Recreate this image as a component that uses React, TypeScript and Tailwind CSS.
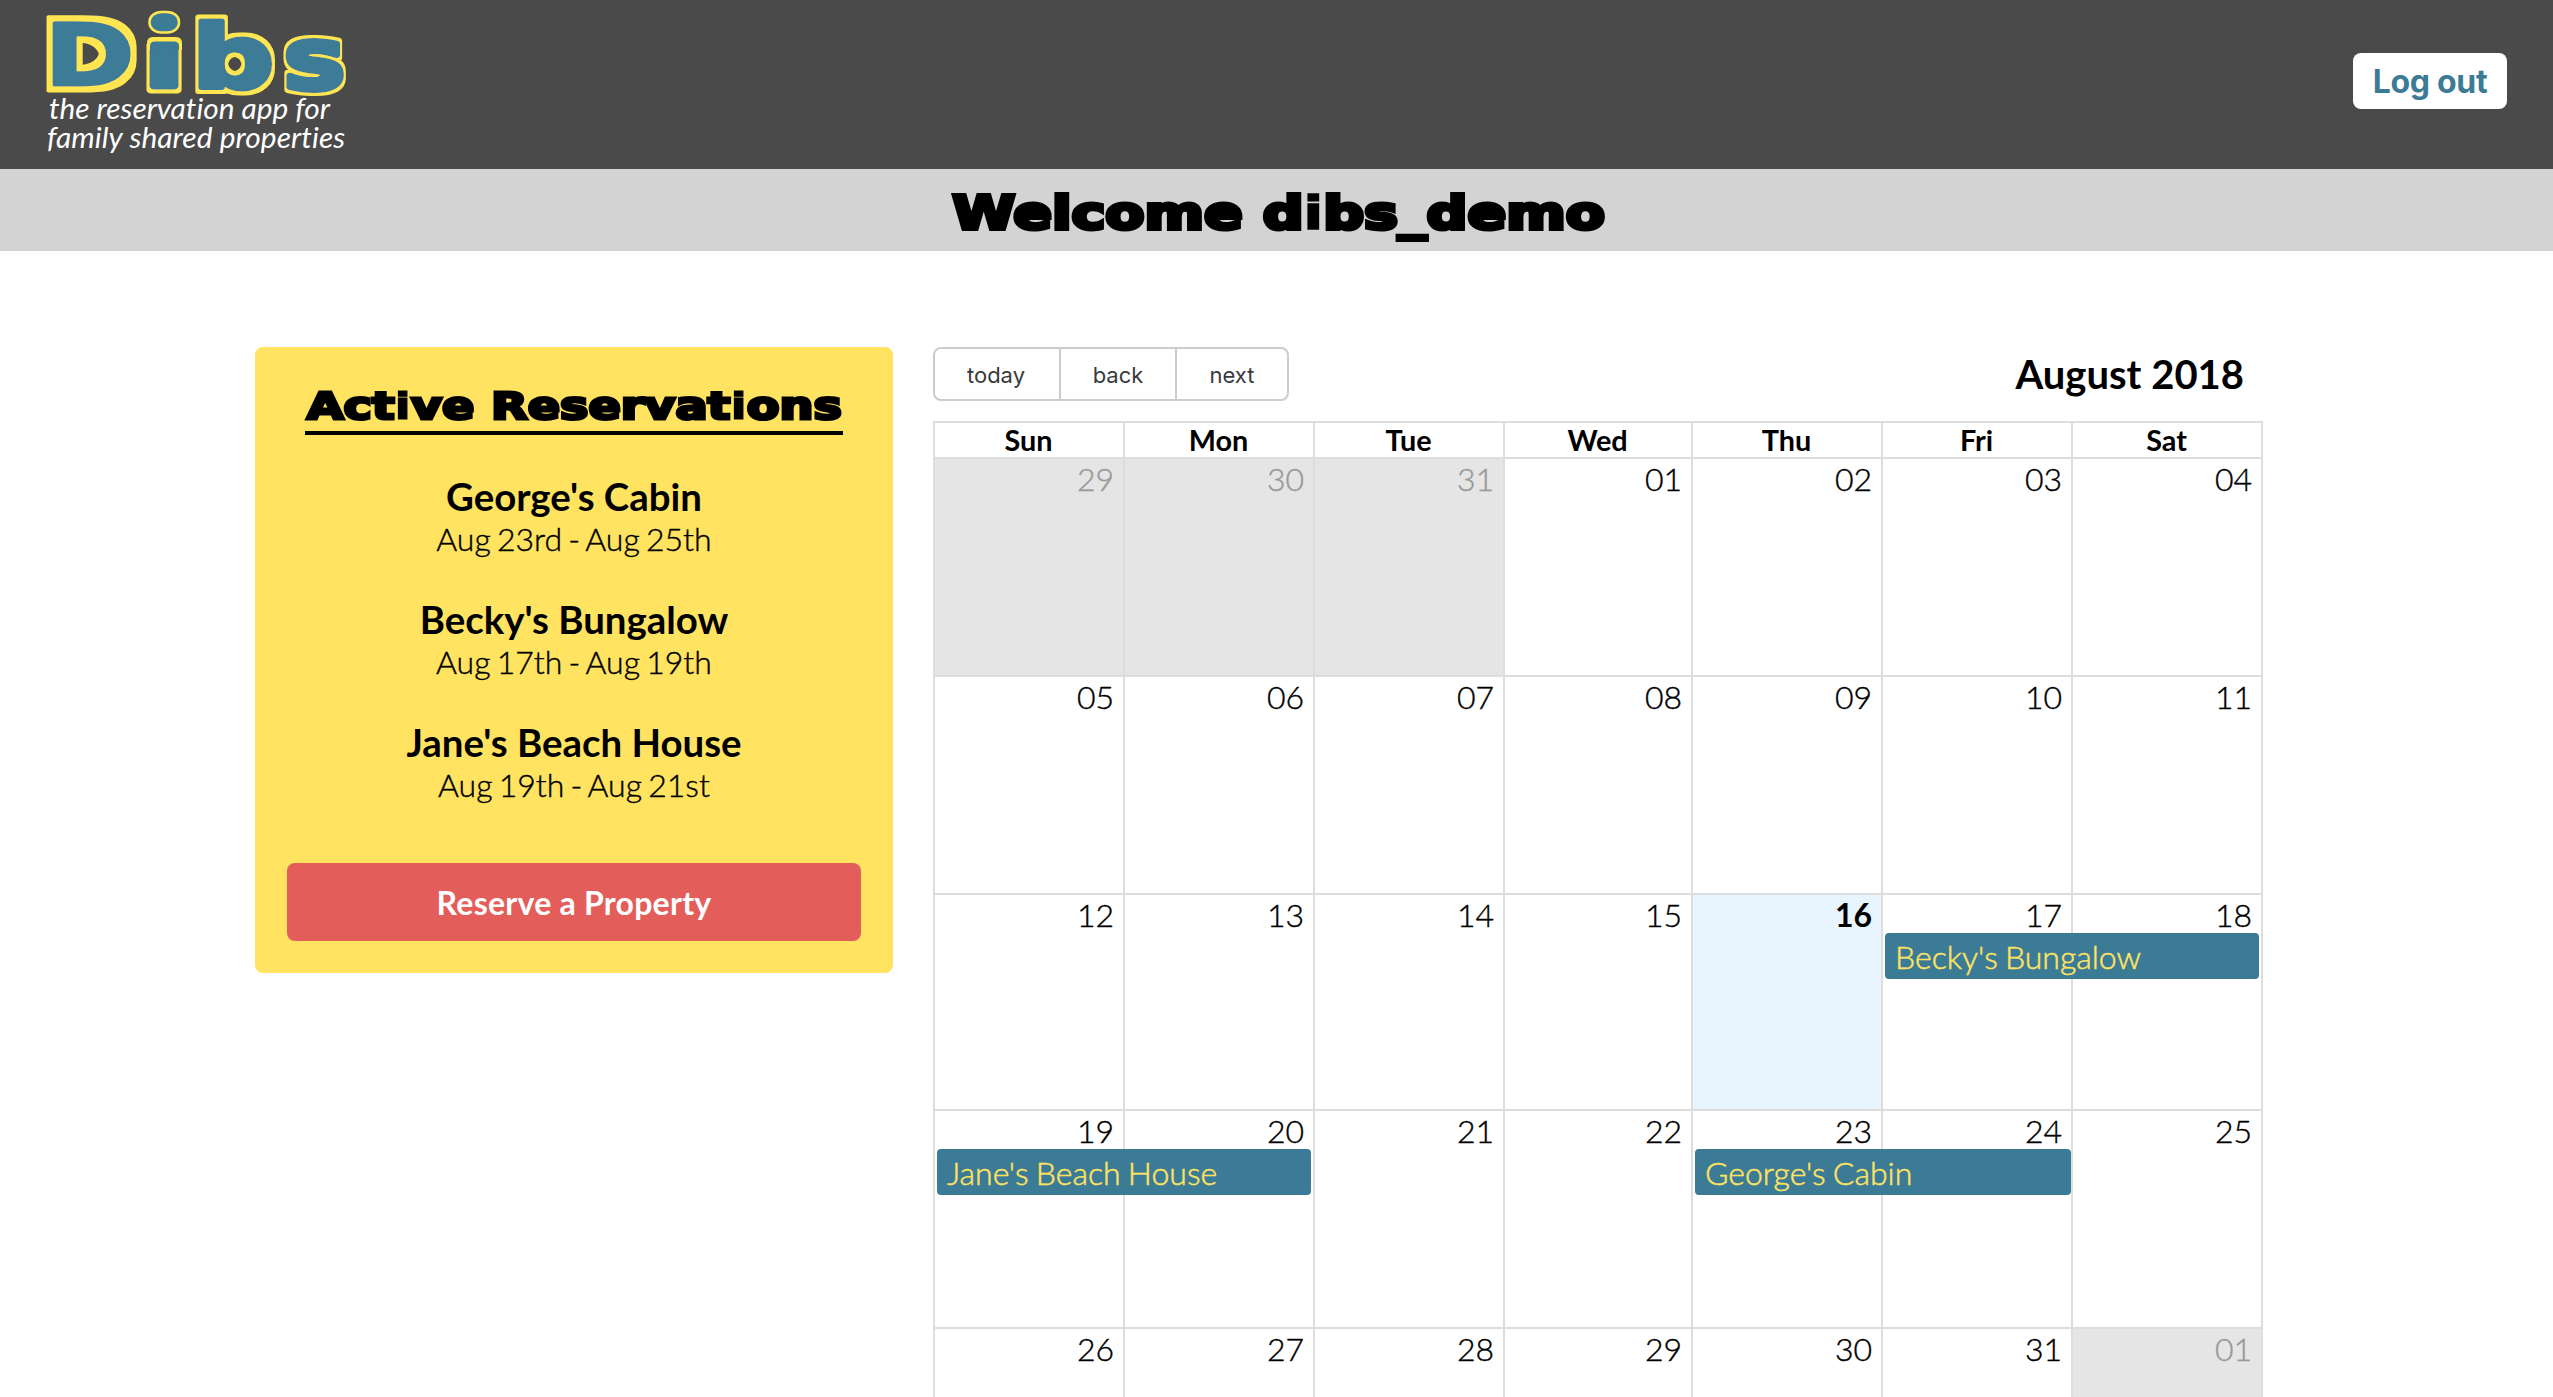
const LOGO_LETTERS = [
  { char: "D", x: 89.5, y: 84.5, sx: 1.26, size: 86, stroke: 3, filter: "url(#outline-thick)" },
  { char: "i", x: 164, y: 86, sx: 1.34, size: 84, stroke: 7, filter: "url(#outline)" },
  { char: "b", x: 233, y: 87, sx: 1.3, size: 88, stroke: 5, filter: "url(#outline)" },
  { char: "s", x: 314.5, y: 88.5, sx: 1.2, size: 86, stroke: 6, filter: "url(#outline-thin)" },
];

const OUTLINES = [
  { id: "outline-thick", radius: "4.5 6" },
  { id: "outline", radius: "2.6 4" },
  { id: "outline-thin", radius: "2 3" },
];

function Logo() {
  return (
    <div className="ml-10 h-[169px] w-[320px]">
      <svg viewBox="40 0 320 94" className="block h-[94px] w-[320px] overflow-visible" role="img" aria-label="Dibs">
        <defs>
          {OUTLINES.map((o) => (
            <filter key={o.id} id={o.id} x="-30%" y="-30%" width="160%" height="160%">
              <feMorphology in="SourceAlpha" operator="dilate" radius={o.radius} result="grown" />
              <feFlood floodColor="#ffe651" />
              <feComposite in2="grown" operator="in" result="edge" />
              <feMerge>
                <feMergeNode in="edge" />
                <feMergeNode in="SourceGraphic" />
              </feMerge>
            </filter>
          ))}
        </defs>
        {LOGO_LETTERS.map((l) => (
          <text
            key={l.char}
            transform={`translate(${l.x} ${l.y}) scale(${l.sx} 1)`}
            textAnchor="middle"
            fontSize={l.size}
            stroke="#3c7b96"
            strokeWidth={l.stroke}
            strokeLinejoin="round"
            fill="#3c7b96"
            filter={l.filter}
            className="font-['DejaVu_Sans',sans-serif] font-bold"
          >
            {l.char}
          </text>
        ))}
        <rect x="142" y="4" width="44" height="40" fill="#4a4a4a" />
        <path d="M147 50V43Q147 37 153 37H176Q182 37 182 43V50Z" fill="#ffe651" />
        <path d="M150 50V46Q150 41.500 155 41.500H174Q179 41.500 179 46V50Z" fill="#3c7b96" />
        <rect x="149.500" y="12" width="29.500" height="20.500" rx="12" ry="9.500" fill="#3c7b96" stroke="#ffe651" strokeWidth="2.500" />
      </svg>
      <div className="text-[29.8px] leading-[28.7px] text-white italic [font-variant-ligatures:none]">
        <div className="ml-[9px] whitespace-nowrap">the reservation app for</div>
        <div className="ml-[7px] tracking-[0.1px] whitespace-nowrap">family shared properties</div>
      </div>
    </div>
  );
}

const RESERVATIONS = [
  { name: "George's Cabin", dates: "Aug 23rd - Aug 25th" },
  { name: "Becky's Bungalow", dates: "Aug 17th - Aug 19th" },
  { name: "Jane's Beach House", dates: "Aug 19th - Aug 21st" },
];

function ReservationsPanel() {
  return (
    <aside className="flex h-[626px] w-[638px] shrink-0 flex-col items-center rounded-lg bg-[#ffe361] px-8">
      <div className="mt-[34px] flex h-[54px] w-[538px] justify-center border-b-4 border-black">
        <h2 className="origin-center scale-x-[1.255] text-[38px] leading-[50px] font-bold whitespace-nowrap font-['DejaVu_Sans',sans-serif] [-webkit-text-stroke:3px_black]">
          Act<span className="[-webkit-text-stroke:1px_black]">i</span>ve Reservat
          <span className="[-webkit-text-stroke:1px_black]">i</span>ons
        </h2>
      </div>
      <ul className="mt-[38px] flex flex-col gap-[37px] text-center">
        {RESERVATIONS.map((r) => (
          <li key={r.name}>
            <div className="text-[38.4px] leading-[46px] font-bold">{r.name}</div>
            <div className="text-[32px] leading-10 font-light [word-spacing:-2.5px] [-webkit-text-stroke:0.4px_black]">
              {r.dates}
            </div>
          </li>
        ))}
      </ul>
      <button className="mt-auto mb-8 h-[78px] w-full rounded-lg bg-[#e35e5a] pt-0.5 text-[32px] font-bold tracking-[0.25px] text-white">
        Reserve a Property
      </button>
    </aside>
  );
}

type Event = { title: string; place: string };
type Week = { days: string[]; height: string; off: number[]; events?: Event[] };

const DAY_NAMES = ["Sun", "Mon", "Tue", "Wed", "Thu", "Fri", "Sat"];
const COLUMNS = "grid grid-cols-[188px_190px_190px_188px_190px_190px_190px]";

const WEEKS: Week[] = [
  { days: ["29", "30", "31", "01", "02", "03", "04"], height: "h-[216px]", off: [0, 1, 2] },
  { days: ["05", "06", "07", "08", "09", "10", "11"], height: "h-[218px]", off: [] },
  {
    days: ["12", "13", "14", "15", "16", "17", "18"],
    height: "h-[216px]",
    off: [],
    events: [{ title: "Becky's Bungalow", place: "col-start-6 col-span-2 ml-1 mr-0.5" }],
  },
  {
    days: ["19", "20", "21", "22", "23", "24", "25"],
    height: "h-[218px]",
    off: [],
    events: [
      { title: "Jane's Beach House", place: "col-start-1 col-span-2 ml-0.5 mr-0.5" },
      { title: "George's Cabin", place: "col-start-5 col-span-2 ml-1" },
    ],
  },
  { days: ["26", "27", "28", "29", "30", "31", "01"], height: "h-[218px]", off: [6] },
];

function dayStyle(day: string, off: boolean) {
  if (day === "16") return "bg-[#e8f5ff] font-bold";
  if (off) return "bg-[#e5e5e5] font-light text-[#999] [-webkit-text-stroke:0.4px_#999]";
  return "font-light [-webkit-text-stroke:0.4px_black]";
}

function WeekRow({ week, first }: { week: Week; first: boolean }) {
  return (
    <div className={`relative ${COLUMNS} ${week.height} ${first ? "" : "border-t-2 border-[#ddd]"}`}>
      {week.days.map((d, i) => (
        <div
          key={i}
          className={`pr-[9px] text-right text-[32px] leading-10 ${i ? "border-l-2 border-[#ddd]" : ""} ${dayStyle(
            d,
            week.off.includes(i),
          )}`}
        >
          {d}
        </div>
      ))}
      {week.events && (
        <div className={`absolute inset-x-0 top-[38px] ${COLUMNS}`}>
          {week.events.map((e) => (
            <div
              key={e.title}
              className={`row-start-1 h-[46px] rounded-[4px] bg-[#3c7b96] pl-2.5 text-[32px] leading-[47px] font-light text-[#ffe361] [word-spacing:-1.5px] [-webkit-text-stroke:0.5px_#ffe361] ${e.place}`}
            >
              {e.title}
            </div>
          ))}
        </div>
      )}
    </div>
  );
}

function Calendar() {
  return (
    <section className="w-[1330px] shrink-0">
      <div className="flex h-[54px] items-center justify-between">
        <div className="flex h-[54px] rounded-lg border-2 border-[#ccc] text-[22px] text-[#373a3c] font-['Inter',sans-serif]">
          <button className="w-[124px] pt-0.5 pr-0.5">today</button>
          <button className="w-[116px] border-l-2 border-[#ccc] pt-0.5">back</button>
          <button className="w-[112px] border-l-2 border-[#ccc] pt-0.5">next</button>
        </div>
        <div className="pr-[19px] text-[40px] leading-[48px] font-bold">August 2018</div>
      </div>
      <div className="mt-5 border-2 border-[#ddd]">
        <div className={`h-9 border-b-2 border-[#ddd] ${COLUMNS}`}>
          {DAY_NAMES.map((d, i) => (
            <div
              key={d}
              className={`pr-px text-center text-[28.8px] leading-[34px] font-bold ${i ? "border-l-2 border-[#ddd]" : ""}`}
            >
              {d}
            </div>
          ))}
        </div>
        {WEEKS.map((w, i) => (
          <WeekRow key={i} week={w} first={i === 0} />
        ))}
      </div>
    </section>
  );
}

export default function App() {
  return (
    <div className="h-[1397px] w-[2553px] overflow-hidden bg-white text-black font-['Lato',sans-serif]">
      <header className="flex h-[169px] items-start justify-between bg-[#4a4a4a]">
        <Logo />
        <button className="mt-[53px] mr-[46px] h-14 w-[154px] rounded-lg bg-white pt-0.5 text-[32px] font-bold tracking-[-0.3px] text-[#3c7b96] font-['Inter',sans-serif]">
          Log out
        </button>
      </header>
      <div className="flex h-[82px] items-center justify-center bg-[#d3d3d3]">
        <h1 className="mt-1.5 ml-[5px] scale-x-[1.215] text-[47px] leading-[76px] font-bold whitespace-nowrap font-['DejaVu_Sans',sans-serif] [-webkit-text-stroke:4px_black]">
          Welcome d<span className="[-webkit-text-stroke:1.5px_black]">i</span>bs_demo
        </h1>
      </div>
      <main className="flex items-start gap-10 pt-24 pl-[255px]">
        <ReservationsPanel />
        <Calendar />
      </main>
    </div>
  );
}
